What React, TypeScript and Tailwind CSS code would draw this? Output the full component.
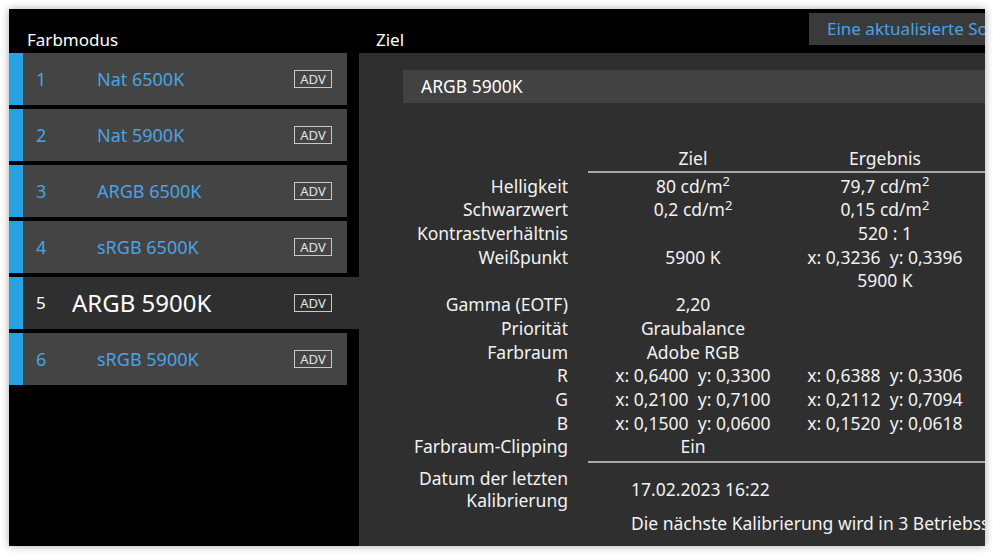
import React from "react";

type Mode = { id: number; name: string };

const MODES: Mode[] = [
  { id: 1, name: "Nat 6500K" },
  { id: 2, name: "Nat 5900K" },
  { id: 3, name: "ARGB 6500K" },
  { id: 4, name: "sRGB 6500K" },
  { id: 5, name: "ARGB 5900K" },
  { id: 6, name: "sRGB 5900K" },
];

const SELECTED = 5;

type Row = { label: string; target?: React.ReactNode; result?: React.ReactNode };

const cd = (v: string) => (
  <>
    {v} cd/m<sup className="text-[13px]">2</sup>
  </>
);

const xy = (x: string, y: string) => (
  <>
    x: {x}&nbsp;&nbsp;y: {y}
  </>
);

const ROWS: Row[] = [
  { label: "Helligkeit", target: cd("80"), result: cd("79,7") },
  { label: "Schwarzwert", target: cd("0,2"), result: cd("0,15") },
  { label: "Kontrastverhältnis", result: "520 : 1" },
  { label: "Weißpunkt", target: "5900 K", result: xy("0,3236", "0,3396") },
  { label: "", result: "5900 K" },
  { label: "Gamma (EOTF)", target: "2,20" },
  { label: "Priorität", target: "Graubalance" },
  { label: "Farbraum", target: "Adobe RGB" },
  { label: "R", target: xy("0,6400", "0,3300"), result: xy("0,6388", "0,3306") },
  { label: "G", target: xy("0,2100", "0,7100"), result: xy("0,2112", "0,7094") },
  { label: "B", target: xy("0,1500", "0,0600"), result: xy("0,1520", "0,0618") },
  { label: "Farbraum-Clipping", target: "Ein" },
];

function AdvBadge({ active }: { active: boolean }) {
  return (
    <span
      className={`flex h-[18px] w-[38px] items-center justify-center border border-[#c8c8c8] text-[13px] leading-none text-[#e4e4e4] ${active ? "mr-[27px]" : "mr-[15px]"}`}
    >
      ADV
    </span>
  );
}

function ModeRow({ mode }: { mode: Mode }) {
  const active = mode.id === SELECTED;
  return (
    <div className={`flex h-[52px] ${active ? "w-[350px]" : "w-[338px]"}`}>
      <div className="w-[14px] shrink-0 bg-[#29a3e0]" />
      <div
        className={`flex flex-1 items-center ${active ? "bg-[#2f2f2f] text-white" : "bg-[#444444] text-[#4ba3e3]"}`}
      >
        {active ? (
          <>
            <span className="w-[49px] shrink-0 pl-[13px] text-[17px]">{mode.id}</span>
            <span className="flex-1 text-[24px]">{mode.name}</span>
          </>
        ) : (
          <>
            <span className="w-[74px] shrink-0 pl-[13px] text-[18px]">{mode.id}</span>
            <span className="flex-1 text-[18px]">{mode.name}</span>
          </>
        )}
        <AdvBadge active={active} />
      </div>
    </div>
  );
}

export default function App() {
  return (
    <div
      className="h-[554px] w-[993px] overflow-hidden bg-white pl-[9px] pt-[9px]"
      style={{ fontFamily: '"Noto Sans", "Open Sans", sans-serif' }}
    >
      <div className="flex h-[537px] w-[976px] flex-col overflow-hidden bg-black text-[#f2f2f2] shadow-[0_0_8px_rgba(0,0,0,0.35)]">
        {/* header */}
        <div className="flex h-[44px] shrink-0">
          <div className="flex w-[350px] shrink-0 items-end pb-[1px] pl-[18px] text-[17px] leading-[24px] text-white">
            Farbmodus
          </div>
          <div className="flex">
            <div className="w-[450px] shrink-0 self-end pb-[1px] pl-[17px] text-[17px] leading-[24px] text-white">
              Ziel
            </div>
            <div className="mt-[4px] h-[32px] shrink-0 whitespace-nowrap bg-[#3a3a3a] px-[18px] text-[17px] leading-[32px] text-[#4ba3e3]">
              Eine aktualisierte Software ist verfügbar
            </div>
          </div>
        </div>

        {/* body */}
        <div className="flex flex-1">
          <div className="flex w-[350px] shrink-0 flex-col gap-[4px]">
            {MODES.map((m) => (
              <ModeRow key={m.id} mode={m} />
            ))}
          </div>

          <div className="flex flex-1 flex-col bg-[#2f2f2f] text-[17.5px]">
            <div className="ml-[44px] mt-[17px] flex h-[33px] items-center bg-[#424242] pl-[18px] text-white">
              ARGB 5900K
            </div>

            {/* table header */}
            <div className="mt-[42px] flex h-[26px] items-center">
              <div className="w-[229px] shrink-0" />
              <div className="w-[210px] shrink-0 text-center">Ziel</div>
              <div className="w-[174px] shrink-0 text-center">Ergebnis</div>
            </div>
            <div className="ml-[229px] h-[2px] bg-[#a8a8a8]" />

            <div className="pt-[1px]">
              {ROWS.map((r, i) => (
                <div key={i} className="flex h-[23.7px] items-center whitespace-nowrap">
                  <div className="w-[209px] shrink-0 text-right">{r.label}</div>
                  <div className="ml-[20px] w-[210px] shrink-0 text-center">{r.target}</div>
                  <div className="w-[174px] shrink-0 text-center">{r.result}</div>
                </div>
              ))}
            </div>

            <div className="ml-[229px] mt-[3px] h-[2px] bg-[#a8a8a8]" />

            <div className="mt-[4px] flex items-center">
              <div className="w-[209px] shrink-0 text-right leading-[22px]">
                Datum der letzten
                <br />
                Kalibrierung
              </div>
              <div className="ml-[63px] whitespace-nowrap">17.02.2023 16:22</div>
            </div>
            <div className="ml-[272px] whitespace-nowrap leading-[24px]">
              Die nächste Kalibrierung wird in 3 Betriebsstunden empfohlen.
            </div>
          </div>
        </div>
      </div>
    </div>
  );
}
